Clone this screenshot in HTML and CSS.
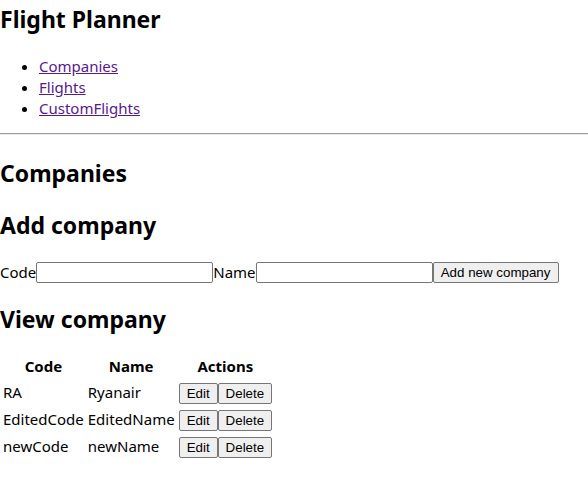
FILE: index.html
```html
<!DOCTYPE html>
<html lang="en">
<head>
  <meta charset="UTF-8">
  <meta name="viewport" content="width=device-width, initial-scale=1.0">
  <title>Flight Planner</title>
  <link rel="stylesheet" href="styles.css">
</head>
<body>

  <!-- Header / Nav -->
  <h2 class="app-title">Flight Planner</h2>
  <ul class="nav-list">
    <li><a href="#companies">Companies</a></li>
    <li><a href="#flights">Flights</a></li>
    <li><a href="#custom">CustomFlights</a></li>
  </ul>
  <hr>

  <!-- Companies page -->
  <h2 class="page-title">Companies</h2>

  <h2>Add company</h2>
  <form class="add-form">
    <label for="code">Code</label><input type="text" id="code"><label for="name">Name</label><input type="text" id="name"><button type="button">Add new company</button>
  </form>

  <h2>View company</h2>
  <table class="company-table">
    <thead>
      <tr>
        <th>Code</th>
        <th>Name</th>
        <th>Actions</th>
      </tr>
    </thead>
    <tbody>
      <tr>
        <td>RA</td>
        <td>Ryanair</td>
        <td><button type="button">Edit</button><button type="button">Delete</button></td>
      </tr>
      <tr>
        <td>EditedCode</td>
        <td>EditedName</td>
        <td><button type="button">Edit</button><button type="button">Delete</button></td>
      </tr>
      <tr>
        <td>newCode</td>
        <td>newName</td>
        <td><button type="button">Edit</button><button type="button">Delete</button></td>
      </tr>
    </tbody>
  </table>

</body>
</html>
```

FILE: styles.css
```css
/* Global */
body {
  font-family: 'Noto Sans', sans-serif;
  font-size: 15px;
  line-height: 21px;
  color: #000;
  background-color: #fff;
  margin: 0;
}

h2 {
  font-size: 23px;
  line-height: 32px;
  margin: 20px 0;
}

.app-title {
  margin-top: 0;
  padding-top: 3px;
}

.page-title {
  margin-top: 22px;
}

/* Nav */
.nav-list {
  margin: 21px 0 14px;
  padding-left: 39px;
}

.nav-list a {
  color: #551a8b;
}

hr {
  margin: 0;
  border: none;
  border-top: 1px solid #9a9a9a;
  border-bottom: 1px solid #eee;
}

/* Form */
.add-form {
  display: flex;
  align-items: center;
  height: 22px;
}

.add-form input {
  width: 177px;
  height: 21px;
  box-sizing: border-box;
  border: 1px solid #767676;
  border-radius: 2px;
  margin: 0;
  padding: 1px 2px;
  font-size: 13px;
}

button {
  font-family: 'Liberation Sans', Arial, sans-serif;
  font-size: 13.33px;
  height: 21px;
  padding: 1px 7px;
  margin: 0;
  color: #000;
  background-color: #efefef;
  border: 1px solid #767676;
  border-radius: 2px;
}

.add-form button {
  width: 126px;
}

/* Table */
.company-table {
  border-spacing: 2px;
  margin-top: -2px;
}

.company-table th,
.company-table td {
  padding: 1px;
  text-align: left;
  height: 23px;
}

.company-table th {
  text-align: center;
  height: 21px;
}
```
